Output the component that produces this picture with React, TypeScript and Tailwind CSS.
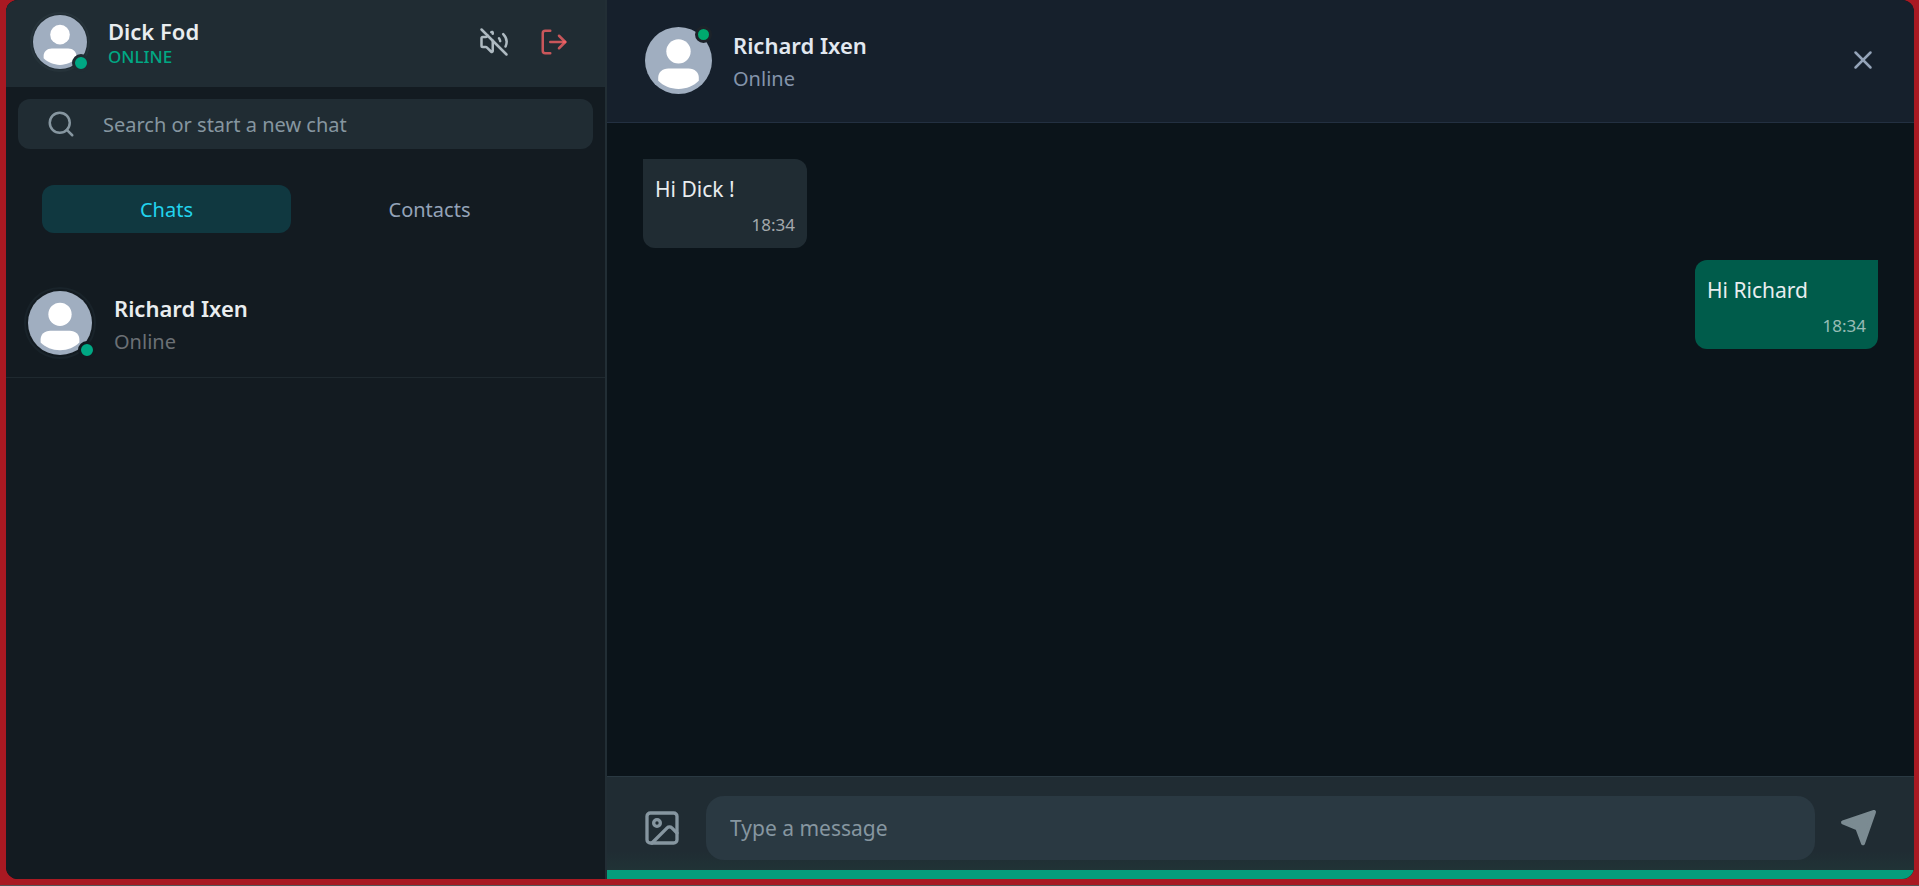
import type { ReactNode } from 'react';
import { Image, LogOut, Search, VolumeOff, X } from 'lucide-react';

function Avatar({ className, children }: { className: string; children?: ReactNode }) {
  return (
    <div className={`relative shrink-0 rounded-full ${className}`}>
      <svg viewBox="0 0 66 66" className="block size-full" aria-hidden="true">
        <circle cx="33" cy="33" r="33" fill="#a0aec0" />
        <circle cx="33" cy="24" r="12" fill="#fff" />
        <path
          d="M23 41h20c6 0 10 4 10 9v3c-5 5-12 8-20 8s-15-3-20-8v-3c0-5 4-9 10-9z"
          fill="#fff"
        />
      </svg>
      {children}
    </div>
  );
}

function SendIcon() {
  return (
    <svg viewBox="0 0 40 40" className="size-10" aria-hidden="true">
      <path
        d="M35 4 4 14.3l14.5 6.2L24 35.3z"
        fill="currentColor"
        stroke="currentColor"
        strokeWidth="4"
        strokeLinejoin="round"
      />
    </svg>
  );
}

const messages = [
  { text: 'Hi Dick !', time: '18:34', mine: false },
  { text: 'Hi Richard', time: '18:34', mine: true },
];

function Message({ text, time, mine }: { text: string; time: string; mine: boolean }) {
  return (
    <li
      className={`flex flex-col px-3 pt-4 pb-[11px] ${
        mine
          ? 'min-w-[183px] self-end rounded-b-xl rounded-tl-xl bg-[#005c4b]'
          : 'min-w-[164px] self-start rounded-b-xl rounded-tr-xl bg-[#202c33]'
      }`}
    >
      <p className="text-[21px] leading-7 text-[#e9edef]">{text}</p>
      <time className="mt-[10px] self-end text-[17px] leading-6 text-white/60">{time}</time>
    </li>
  );
}

export default function App() {
  return (
    <div className="flex h-screen flex-col border-b border-[#555] bg-[#a91922] pr-[5px] pb-[6px] pl-[6px] font-['Noto_Sans',sans-serif]">
      <div className="flex min-h-0 flex-1 overflow-hidden rounded-xl bg-[#0b141a]">
        <aside className="flex w-[601px] shrink-0 flex-col border-r-2 border-[#222e35] bg-[#131b21]">
          <header className="flex h-[87px] items-center bg-[#202c33] pr-9 pb-[3px] pl-6">
            <Avatar className="size-[60px] border-2 border-[#26333a] p-px">
              <span className="absolute -right-[2px] -bottom-[2px] size-[18px] rounded-full border-3 border-[#202c33] bg-[#00a884]" />
            </Avatar>
            <div className="ml-[18px] flex-1 pt-[2px]">
              <h1 className="text-[22px] leading-7 font-semibold text-[#e9edef]">Dick Fod</h1>
              <p className="text-[17px] leading-6 font-medium text-[#00a884]">ONLINE</p>
            </div>
            <div className="flex gap-[30px]">
              <button type="button" aria-label="Unmute sounds" className="text-[#aebac1]">
                <VolumeOff size={30} strokeWidth={2} />
              </button>
              <button type="button" aria-label="Log out" className="text-red-400/75">
                <LogOut size={30} strokeWidth={2} />
              </button>
            </div>
          </header>

          <label className="mx-3 mt-3 flex h-[50px] items-center rounded-xl bg-[#202c33] pl-7 text-[#8696a0]">
            <Search size={30} strokeWidth={2} />
            <input
              type="text"
              aria-label="Search or start a new chat"
              placeholder="Search or start a new chat"
              className="ml-[27px] min-w-0 flex-1 bg-transparent pt-[2px] text-[20px] text-[#e9edef] outline-none placeholder:text-[#8696a0]"
            />
          </label>

          <nav className="mt-9 mr-[51px] ml-9 flex h-12 gap-[14px] text-[20px]">
            <button type="button" className="flex-1 rounded-xl bg-[#103840] pt-[2px] text-[#22d3ee]">
              Chats
            </button>
            <button type="button" className="flex-1 rounded-xl pt-[2px] text-[#94a3b8]">
              Contacts
            </button>
          </nav>

          <ul className="mt-[46px]">
            <li className="flex h-[99px] items-start border-b border-[#1f292f] pt-2 pl-[18px]">
              <Avatar className="size-[72px] border-2 border-[#19232a] p-[2px]">
                <span className="absolute -right-[2px] -bottom-[2px] size-[18px] rounded-full border-3 border-[#131b21] bg-[#00a884]" />
              </Avatar>
              <div className="ml-[18px] pt-[5px]">
                <h2 className="text-[22px] leading-8 font-semibold text-[#e9edef]">Richard Ixen</h2>
                <p className="mt-[2px] text-[20px] leading-8 text-[#6b7075]">Online</p>
              </div>
            </li>
          </ul>
        </aside>

        <main className="flex min-w-0 flex-1 flex-col">
          <header className="flex h-[123px] items-center border-b border-[#233041] bg-[#16202c] pr-9 pb-[2px] pl-[38px]">
            <Avatar className="size-[67px]">
              <span className="absolute -top-px right-0 size-[17px] rounded-full border-3 border-[#1d232a] bg-[#00a96e]" />
            </Avatar>
            <div className="ml-[21px] flex-1 pt-[4px]">
              <h2 className="text-[22px] leading-8 font-semibold text-[#e2e8f0]">Richard Ixen</h2>
              <p className="mt-[2px] text-[20px] leading-8 text-[#8494ab]">Online</p>
            </div>
            <button type="button" aria-label="Close chat" className="text-[#94a3b8]">
              <X size={30} strokeWidth={2} />
            </button>
          </header>

          <ul className="flex flex-1 flex-col gap-3 px-9 pt-9">
            {messages.map((m) => (
              <Message key={m.text} {...m} />
            ))}
          </ul>

          <form className="flex items-center border-t border-b-[9px] border-t-[#2a3942] border-b-[#059d7c] bg-[#202c33] bg-linear-to-t from-[#203336] to-[#202c33] to-20% pt-[19px] pb-[10px] pl-[35px]">
            <button type="button" aria-label="Send an image" className="text-[#8696a0]">
              <Image size={40} strokeWidth={2} />
            </button>
            <input
              type="text"
              aria-label="Type a message"
              placeholder="Type a message"
              className="ml-6 h-16 min-w-0 flex-1 rounded-[18px] bg-[#2a3942] px-6 text-[21px] text-[#e9edef] outline-none placeholder:text-[#8696a0]"
            />
            <button type="submit" aria-label="Send message" className="mr-[35px] ml-6 text-[#7b8b92]">
              <SendIcon />
            </button>
          </form>
        </main>
      </div>
    </div>
  );
}
